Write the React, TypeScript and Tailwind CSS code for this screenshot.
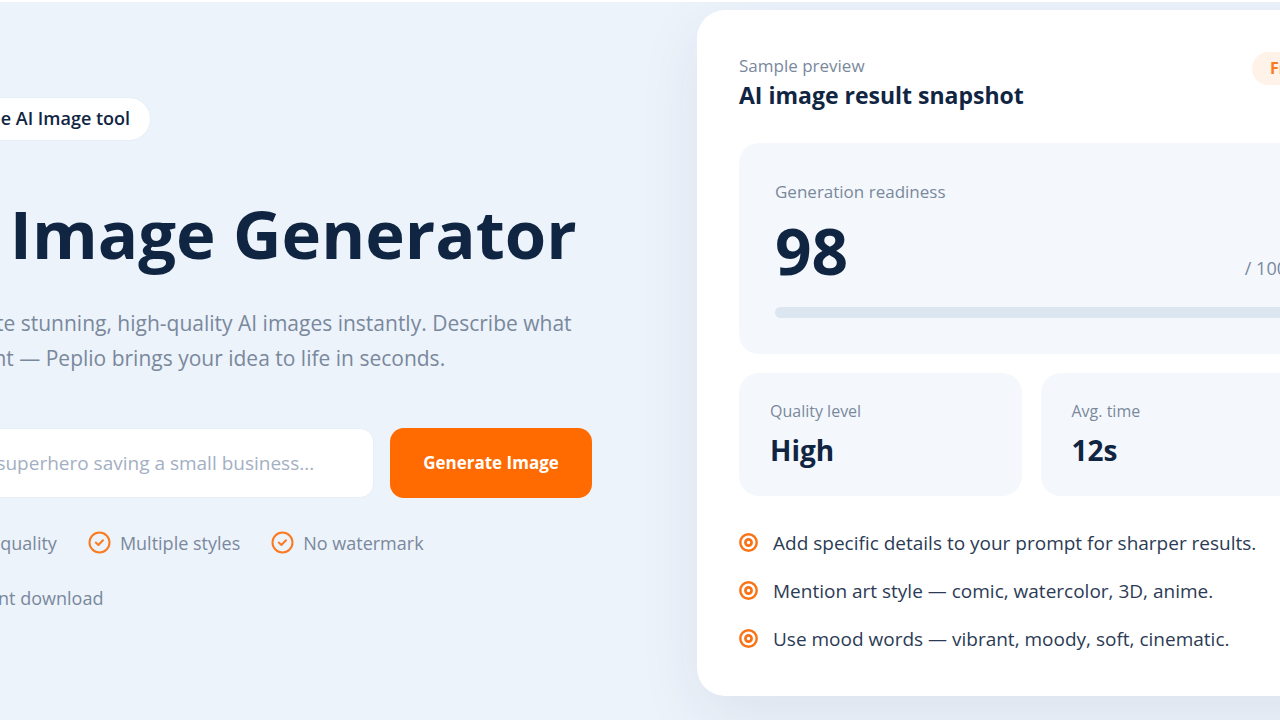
import { CircleCheck } from "lucide-react";

const features = ["High quality", "Multiple styles", "No watermark", "Instant download"];

const stats = [
  { label: "Quality level", value: "High" },
  { label: "Avg. time", value: "12s" },
];

const tips = [
  "Add specific details to your prompt for sharper results.",
  "Mention art style — comic, watercolor, 3D, anime.",
  "Use mood words — vibrant, moody, soft, cinematic.",
];

function CheckIcon() {
  return (
    <svg className="size-6 shrink-0" viewBox="0 0 24 24" fill="none" stroke="#f97a20" strokeWidth="2" strokeLinecap="round" strokeLinejoin="round" aria-hidden="true">
      <circle cx="12.5" cy="11.5" r="10" />
      <path d="m8.8 11.6 2.6 2.4 4.6-4.8" />
    </svg>
  );
}

function TargetIcon() {
  return (
    <svg className="size-5 shrink-0" viewBox="0 0 20 20" fill="none" stroke="#f97316" aria-hidden="true">
      <circle cx="9.5" cy="9.5" r="8.2" strokeWidth="2.4" />
      <circle cx="9.5" cy="9.5" r="3.1" strokeWidth="2.7" />
    </svg>
  );
}

function Intro() {
  return (
    <section className="min-w-0 pt-0.5">
      <div className="inline-flex h-11 items-center gap-2 rounded-full border border-[#e7eff8] bg-white px-5 text-[18px] font-semibold text-[#102542]">
        <CircleCheck className="size-5 text-[#ff6b00]" aria-hidden="true" />
        <span>Free AI Image tool</span>
      </div>
      <h1 className="mt-[54px] text-[67px] leading-[76px] font-bold whitespace-nowrap text-[#102542]">AI Image Generator</h1>
      <p className="mt-[35px] text-[21px] leading-[35px] text-[#7a889c]">
        Generate stunning, high-quality AI images instantly. Describe what you want — Peplio brings your idea to life in seconds.
      </p>
      <form className="mt-[52px] flex gap-4" onSubmit={(e) => e.preventDefault()}>
        <input
          type="text"
          aria-label="Image description"
          placeholder="e.g. a superhero saving a small business..."
          className="h-[70px] min-w-0 flex-1 rounded-[14px] border border-[#e7eff8] bg-white px-5 text-[19px] text-[#102542] outline-none placeholder:text-[#a3afc3]"
        />
        <button type="submit" className="h-[70px] w-[202px] shrink-0 rounded-[14px] bg-[#ff6b00] text-[17px] font-bold text-white">
          Generate Image
        </button>
      </form>
      <ul className="mt-[31px] flex flex-wrap gap-x-[30px] gap-y-[27px] text-[18px] leading-7 text-[#7a889c]">
        {features.map((feature) => (
          <li key={feature} className="flex items-center gap-[9px]">
            <CheckIcon />
            {feature}
          </li>
        ))}
      </ul>
    </section>
  );
}

function Preview() {
  return (
    <section className="min-w-0 rounded-[28px] bg-white p-[42px] shadow-[0_20px_64px_rgba(36,36,70,0.08)]">
      <header className="flex items-start justify-between">
        <div>
          <p className="text-[17px] leading-7 text-[#7a889c]">Sample preview</p>
          <h2 className="text-[23px] leading-[30px] font-bold text-[#102542]">AI image result snapshot</h2>
        </div>
        <span className="rounded-full bg-[#fff2e8] px-[18px] text-[16px] leading-[33px] font-bold text-[#f97a20]">Free</span>
      </header>
      <div className="mt-[33px] rounded-[20px] bg-[#f4f8fd] p-9">
        <p className="text-[17px] leading-[26px] text-[#7a889c]">Generation readiness</p>
        <div className="mt-3.5 flex items-end justify-between">
          <strong className="text-[64px] leading-[64px] font-bold text-[#102542]">98</strong>
          <span className="text-[18px] leading-[30px] text-[#7a889c]">/ 100</span>
        </div>
        <div className="mt-6 h-[11px] rounded-full bg-[#dce6f0]" />
      </div>
      <dl className="mt-[19px] grid grid-cols-2 gap-[19px]">
        {stats.map((stat) => (
          <div key={stat.label} className="rounded-[20px] bg-[#f4f8fd] px-[31px] pt-6 pb-[26px]">
            <dt className="text-[16px] leading-7 text-[#7a889c]">{stat.label}</dt>
            <dd className="mt-1.5 text-[28px] leading-[39px] font-bold text-[#102542]">{stat.value}</dd>
          </div>
        ))}
      </dl>
      <ul className="mt-8 flex flex-col gap-[18px] text-[19px] leading-[30px] text-[#2c3b55]">
        {tips.map((tip) => (
          <li key={tip} className="flex items-center gap-3.5 whitespace-nowrap">
            <TargetIcon />
            {tip}
          </li>
        ))}
      </ul>
    </section>
  );
}

export default function App() {
  return (
    <div className="min-h-screen overflow-hidden border-t-2 border-white bg-[#ecf3fb] font-['Open_Sans',sans-serif]">
      <main className="-mr-[85px] -ml-[76px] grid grid-cols-2 items-center gap-x-[105px] py-2">
        <Intro />
        <Preview />
      </main>
    </div>
  );
}
